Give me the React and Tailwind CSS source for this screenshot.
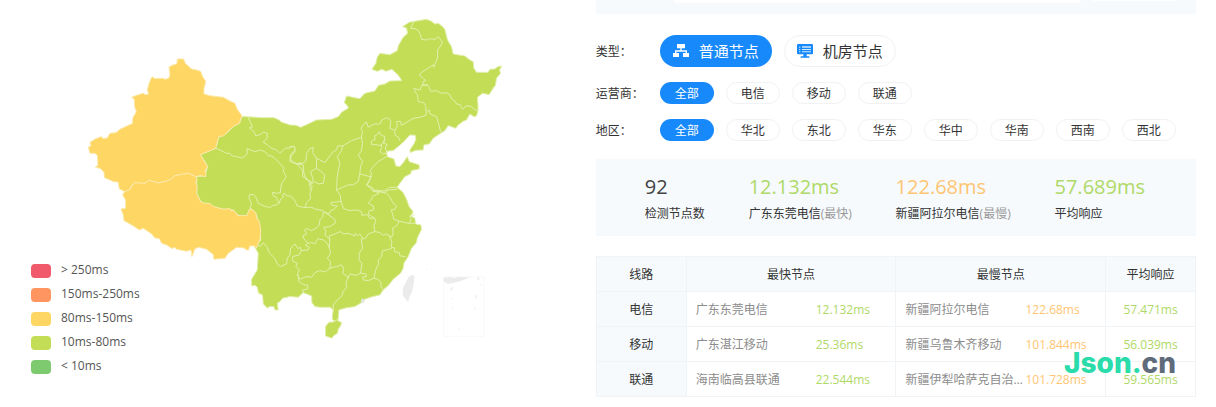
import React from "react";

// Map drawing units: three to a layout pixel. Each outline is given in runs,
// every run relative to the origin of its sheet.
const SHEETS = { A: [240, 30], B: [870, 30], C: [240, 480], D: [720, 480] };

function trace(...runs) {
  return runs
    .map(([sheet, points]) => {
      const [dx, dy] = SHEETS[sheet];
      return points
        .split(" ")
        .map((p) => {
          const [x, y] = p.split(",").map(Number);
          return `${x + dx},${y + dy}`;
        })
        .join(" ");
    })
    .join(" ");
}

const MAINLAND = trace(
  ["A", "486,320 500,320 545,323 582,323 598,330 604,336 630,345"],
  ["B", "0,345 18,346 32,352 50,344 80,330 125,328 145,320 156,306 176,294 170,284 163,278 170,258 210,266 225,250 255,243 266,226 285,222 300,213 336,212 325,195 306,178 288,184 276,178 262,184 246,178 258,160 262,142 270,130 300,134 322,122 326,106 340,82 353,70 350,54 338,50 358,37 385,32 410,28 425,34 435,42 445,40 456,48 465,58 473,90 485,110 490,132 525,138 540,150 550,155 552,175 560,187 595,187 600,178 615,177 624,170 636,168 629,180 632,190 620,205 617,225 608,238 598,254 578,250 563,262 565,300 560,318 552,320 540,312 530,330 520,334 505,345 498,355 475,347 465,362 455,368 430,385 418,402 402,405 400,420 378,421 362,428 360,420 372,402 378,388 376,376 360,375 342,395 325,410 310,422 290,424 292,440 312,447 318,468 330,470 342,456 352,440 358,455 388,465 388,477 365,482 362,492 345,500 330,520 322,532"],
  ["D", "472,82 490,98 500,118 508,140 520,156 512,168 525,175 527,192 543,195 545,208 532,235 530,248 515,265 505,290 492,310 490,325 482,340 460,358 446,376 430,390 420,405 392,412 370,420 362,430 345,440 318,444 297,450 296,466 294,482 285,484 277,478 278,462 280,450 270,442 240,442 225,440 216,428 215,408 190,398 175,412 150,410 128,415 120,425 112,430 115,450 105,450 102,440 90,440 82,444 70,432 68,405 56,400 52,382 45,376 35,378 35,358 52,330 55,280 45,262 62,240"],
  ["C", "542,210 528,160 515,147 508,150 502,166 485,170 475,166 460,150 430,148 390,140 362,125 350,100 350,50 375,48 383,20"],
  ["A", "375,455 361,434 407,415 417,380 437,372 462,348 478,340"]
);

const XINJIANG = trace(
  ["A", "293,147 311,147 316,160 335,177 350,180 362,184 368,200 377,213 376,222 372,235 372,252 390,257 430,262 448,272 465,280 472,298 486,317 478,340 462,348 448,360 437,372 430,378 417,380 412,396 407,415 384,425 361,434 372,452 383,470 376,482 378,500 360,497 348,500 325,490 285,497 272,508 258,514 235,519 220,515 208,511 195,520 180,521 163,518 155,527 148,540 134,545 118,537 115,517 100,515 73,503 72,487 60,475 46,472 54,465 52,437 45,430 30,430 25,412 33,408 30,397 48,386 65,380 68,386 82,384 90,370 108,368 120,358 158,340 158,325 169,305 164,290 163,268 155,262 170,256 190,250 196,254 206,252 202,240 208,218 216,200 225,206 248,205 256,208 267,204 270,195 267,172 276,166 290,162"]
);

const TIBET = trace(
  ["C", "148,90 163,68 195,70 208,61 220,65 235,69 258,64 272,58 285,47 325,40 348,50 352,60 347,66 352,78 350,100 362,125 375,130 390,131 402,140 430,148 450,146 456,154 460,150 475,168 485,166 500,168 508,150 515,147 528,160 530,174 538,184 542,210 540,240 534,252 530,264 522,258 510,258 505,272 490,264 470,262 445,280 435,295 402,298 400,284 380,268 355,262 344,268 340,280 336,290 333,270 320,274 290,268 284,262 276,266 260,255 245,250 238,236 225,234 215,222 190,205 178,210 160,198 132,182 130,165 123,148 130,146 137,145 137,120 128,105 134,95"]
);

const HAINAN = trace(["D", "268,487 280,486 290,480 305,488 303,496 295,508 293,520 283,526 275,535 257,528 257,500"]);

const BORDERS = [
  ["A", "407,415 420,420 440,430 450,430 456,438 470,440 484,444 494,440 502,430 501,416 525,425 540,420 556,426 566,438 576,438 600,460 612,475 610,484 619,500 612,512 605,520 602,540"],
  ["D", "122,90 122,98 110,100 97,97 100,108 110,112 112,122 118,130 122,118 130,112 128,104 135,100 140,108 150,108 160,115 166,125 172,138 195,143"],
  ["D", "30,147 35,130 28,118 28,105 40,103 48,112 55,130 72,138 90,143 96,138 112,134 118,126"],
  ["A", "505,322 512,338 518,350 508,354 520,362 528,378 544,372 550,366 562,370 562,384 550,397 562,404 575,415 590,420 600,430 615,415 630,414 640,408 646,416 642,425 632,434 630,448 650,462 664,458"],
  ["B", "0,410 14,410 15,425 4,438 0,455 20,462 38,460 48,452 50,430 58,418 70,412 68,428 80,445 105,458 120,438 130,425 140,420 143,408 158,408"],
  ["B", "20,462 38,480 38,500 52,506 60,522 68,530 60,540"],
  ["B", "80,445 80,475 62,485 70,510 60,525 75,515 85,522 100,520 105,495 96,486 80,475"],
  ["B", "158,408 155,422 142,440 150,460 146,480 142,500 140,540 175,525 190,524 205,515 210,490 212,470 218,455 205,435 214,424 218,400 215,382 185,392 158,408"],
  ["B", "215,382 218,366 213,355 222,342 230,336 235,352 252,342 270,342 276,330 290,323 300,328 303,335 300,355 314,360 316,376 326,382 330,392"],
  ["B", "316,360 322,350 320,335 332,334 335,346 352,336 370,325 390,322 408,316 410,305 418,300 420,312 440,320 446,340 452,365"],
  ["B", "408,303 408,290 402,278 385,275 383,255 376,246 372,235 390,240 396,226 412,225"],
  ["B", "412,225 418,232 422,244 440,242 455,250 470,248 480,254 486,268 496,274 500,282 510,284 518,298 530,287 545,290 555,300 563,300"],
  ["B", "412,225 398,224 400,214 408,212 400,205 388,195 396,186 410,178 430,165 432,172 436,160 443,145 443,120 452,108 458,97 445,80 436,88 422,86 412,90 395,88 392,74 385,62 376,56 363,55 370,37"],
  ["B", "268,366 274,376 285,380 282,398 270,407 258,404 245,404 244,394 256,388 254,378 262,374 268,366"],
  ["B", "285,388 280,398 292,404 286,414 292,428 280,432 270,425 276,412 274,404"],
  ["B", "290,440 265,455 248,472 240,485 246,492 240,500 225,496 210,492"],
  ["B", "242,498 240,510 232,525 250,535 250,545 285,542 300,532 322,532"],
  ["D", "165,10 190,15 192,40 198,58 212,64 208,76 216,88 210,100 212,115 200,128 195,143 215,142 228,148 250,152 258,160"],
  ["D", "290,90 302,108 302,120 310,145 328,152 350,150 365,155 366,166 382,164 390,176 404,174"],
  ["D", "305,124 272,128 276,136 292,138 280,150 272,152 268,162 252,156"],
  ["D", "395,50 380,75 400,92 412,90 432,98 446,90 472,88"],
  ["D", "400,92 418,100 400,108 392,122 385,130 400,138 402,150 388,152 385,164 404,174 408,185 402,195 405,215"],
  ["D", "412,94 440,100 450,112 460,130 470,138 465,148 454,150 458,162 462,178 478,184 505,190 525,190"],
  ["D", "524,164 510,168 514,178 508,190"],
  ["D", "405,215 420,218 430,226 440,222 455,232 460,222 458,205 470,198 478,184"],
  ["D", "448,228 456,245 454,262 464,264 464,275 478,278 480,288 495,290"],
  ["D", "454,266 440,270 428,272 425,290 415,300 416,312 408,328 402,355"],
  ["D", "405,215 385,222 378,234 364,238 368,265 358,280 358,300 366,310 362,340"],
  ["D", "270,238 268,228 285,222 300,215 312,222 326,220 344,228 346,220 352,228 360,222 368,235"],
  ["D", "258,160 270,168 285,178 286,190 270,200 252,202 258,214 255,225 270,238 268,262"],
  ["D", "250,158 248,172 240,180 238,196 228,205 215,212 200,206 194,210 200,222 188,228 194,240 205,250 215,248 225,252 234,236 250,240 262,250 268,262"],
  ["D", "45,262 50,250 60,260 70,248 82,262 88,278 105,296 112,312 122,320 140,312 142,295 150,285 152,266 165,252 174,266 182,262 184,272 205,270 208,262 196,256 205,250"],
  ["D", "184,272 178,285 158,290 158,303 172,310 168,320 178,330 172,345 180,358 200,350 215,352 225,338 240,332 256,336 270,325"],
  ["D", "268,262 272,280 262,295 272,305 270,325 288,320 305,315 312,328 308,340 325,352"],
  ["D", "325,352 330,342 348,346 362,340 378,342 380,350 368,352 370,360 385,362 402,355 412,358 422,365 424,380 430,390"],
  ["D", "325,352 318,370 320,382 310,395 306,408 292,420 280,435 280,450"],
  ["D", "175,345 176,364 190,374 204,376 202,388 188,390 190,398"],
];

const BANDS = [
  { label: "> 250ms", swatch: "bg-[#f15a6a]" },
  { label: "150ms-250ms", swatch: "bg-[#ff9661]" },
  { label: "80ms-150ms", swatch: "bg-[#fdd663]" },
  { label: "10ms-80ms", swatch: "bg-[#c3dd57]" },
  { label: "< 10ms", swatch: "bg-[#7dcb6e]" },
];

function ChinaMap() {
  return (
    <svg
      viewBox="0 0 1788 1221"
      className="col-start-1 row-start-1 block w-full"
      role="img"
      aria-label="全国响应时间分布"
    >
      <g stroke="#e2efac" strokeWidth="3" strokeLinejoin="round" strokeLinecap="round">
        <polygon points={MAINLAND} fill="#c3dd57" />
        <polygon points={HAINAN} fill="#c3dd57" />
        <g fill="none">
          {BORDERS.map((line, i) => (
            <polyline key={i} points={trace(line)} />
          ))}
        </g>
        <g stroke="#fce9ab">
          <polygon points={XINJIANG} fill="#fdd663" />
          <polygon points={TIBET} fill="#fdd663" />
        </g>
      </g>
      <g transform="translate(720 480)" fill="#ebebeb">
        <path d="M515 345l9 3-2 22-6 26-7 14-4 17-10-12-7-10 2-22 10-20 6-12z" />
        <path d="M363 420l6-4 7 4-4 8-7 4z" fill="#e3e8df" />
        <path d="M558 326h4v4h-4z" fill="#f3f3f3" />
        <rect x="611" y="351" width="122" height="178" fill="none" stroke="#f9f9f9" strokeWidth="3" />
        <path d="M611 354l14-3 18 3 14-3 34 1-31 12-36 8-13-8z" />
        <path
          d="M712 353h7l-1 8h-5zM632 385l10-5-3 8-7 6zM707 405h4v12l-4-2zM702 448l8-8-4 10zM618 476l8 8zM682 487l8-10zM636 414h4v4h-4zM655 506h5v3h-5zM636 440h4v6h-4zM722 372h4v4h-4z"
          fill="#efefef"
        />
      </g>
    </svg>
  );
}

function NodesIcon() {
  return (
    <svg viewBox="0 0 48 42" className="h-3.5 w-4" fill="currentColor" aria-hidden="true">
      <path d="M12 0h24v13H26v6h16v8h6v12H30V27h8v-4H10v4h8v12H0V27h6v-8h16v-6H12z" />
    </svg>
  );
}

function ServerIcon() {
  return (
    <svg viewBox="0 0 48 42" className="h-3.5 w-4" aria-hidden="true">
      <path
        fill="#1789fb"
        d="M3 0h42q3 0 3 3v25q0 3-3 3H29v6h8v4H11v-4h8v-6H3q-3 0-3-3V3Q0 0 3 0z"
      />
      <path
        fill="#fff"
        fillOpacity=".8"
        d="M6 8h4v3H6zM15 7h27v4H15zM6 15h4v3H6zM15 15h27v3H15zM6 22h4v3H6zM15 22h27v3H15z"
      />
    </svg>
  );
}

function FilterRow({ label, options }) {
  return (
    <div className="flex items-center" role="group" aria-label={label}>
      <span className="w-16 shrink-0 pt-0.5">{label}：</span>
      <div className="flex gap-3">
        {options.map((name, i) => (
          <button
            key={name}
            type="button"
            aria-pressed={i === 0}
            className={
              i === 0
                ? "h-[22px] w-[54px] rounded-full bg-[#1789fb] pt-0.5 text-white"
                : "h-[22px] w-[54px] rounded-full border border-[#f1f2f4] bg-white pt-0.5"
            }
          >
            {name}
          </button>
        ))}
      </div>
    </div>
  );
}

function Stat({ value, name, note, tone }) {
  return (
    <div className="whitespace-nowrap">
      <div className={`text-xl leading-7 ${tone}`}>{value}</div>
      <div className="leading-[26px]">
        {name}
        {note && <span className="text-[#999]">{note}</span>}
      </div>
    </div>
  );
}

const ROWS = [
  ["电信", "广东东莞电信", "12.132ms", "新疆阿拉尔电信", "122.68ms", "57.471ms"],
  ["移动", "广东湛江移动", "25.36ms", "新疆乌鲁木齐移动", "101.844ms", "56.039ms"],
  ["联通", "海南临高县联通", "22.544ms", "新疆伊犁哈萨克自治州联通", "101.728ms", "59.565ms"],
];

function NodeCell({ name, time, tone }) {
  return (
    <td className="border border-[#f1f4f6] pt-0.5 pl-[9px]">
      <div className="flex">
        <span className="w-[120px] truncate text-[#8c8c8c]">{name}</span>
        <span className={tone}>{time}</span>
      </div>
    </td>
  );
}

export default function App() {
  return (
    <main className="flex items-start bg-white font-['Open_Sans','Noto_Sans_CJK_SC',sans-serif] text-xs text-[#333]">
      <section className="grid w-[49%] shrink-0">
        <ChinaMap />
        <ul className="col-start-1 row-start-1 mb-[29px] ml-[31px] self-end">
          {BANDS.map(({ label, swatch }) => (
            <li key={label} className="flex h-6 items-center gap-2.5 text-[#555]">
              <span className={`mt-0.5 h-3.5 w-5 rounded-sm ${swatch}`} />
              {label}
            </li>
          ))}
        </ul>
      </section>

      <section className="relative mr-5 min-w-0 flex-1">
        <div className="flex h-3.5 items-start bg-[#f6fafd] pr-5 pl-[78px]">
          <div className="h-[3px] flex-1 rounded-b-sm bg-white" />
          <div className="ml-3 h-px w-[83px] bg-white" />
        </div>

        <div className="mt-[21px] flex items-center" role="group" aria-label="类型">
          <span className="w-16 shrink-0 pt-0.5">类型：</span>
          <div className="flex gap-3 text-[15px]">
            <button
              type="button"
              aria-pressed="true"
              className="flex h-8 w-28 items-center justify-center gap-2.5 rounded-full bg-[#1789fb] text-white"
            >
              <NodesIcon />
              普通节点
            </button>
            <button
              type="button"
              aria-pressed="false"
              className="flex h-8 w-28 items-center justify-center gap-2.5 rounded-full border border-[#f1f2f4] bg-white"
            >
              <ServerIcon />
              机房节点
            </button>
          </div>
        </div>
        <div className="mt-[15px] flex flex-col gap-[15px]">
          <FilterRow label="运营商" options={["全部", "电信", "移动", "联通"]} />
          <FilterRow
            label="地区"
            options={["全部", "华北", "东北", "华东", "华中", "华南", "西南", "西北"]}
          />
        </div>

        <div className="mt-[18px] flex justify-between bg-[#f6fafd] pt-3.5 pr-[51px] pb-[9px] pl-[49px]">
          <Stat value="92" name="检测节点数" tone="text-[#444]" />
          <Stat value="12.132ms" name="广东东莞电信" note="(最快)" tone="text-[#afd966]" />
          <Stat value="122.68ms" name="新疆阿拉尔电信" note="(最慢)" tone="text-[#ffc572]" />
          <Stat value="57.689ms" name="平均响应" tone="text-[#afd966]" />
        </div>

        <table className="mt-5 w-full table-fixed border-collapse">
          <colgroup>
            <col className="w-[15%]" />
            <col className="w-[35%]" />
            <col className="w-[35%]" />
            <col className="w-[15%]" />
          </colgroup>
          <thead>
            <tr className="h-[35px] bg-[#f6fafd]">
              {["线路", "最快节点", "最慢节点", "平均响应"].map((h) => (
                <th key={h} scope="col" className="border border-[#f1f4f6] pt-0.5 font-normal">
                  {h}
                </th>
              ))}
            </tr>
          </thead>
          <tbody>
            {ROWS.map(([line, fast, fastTime, slow, slowTime, mean]) => (
              <tr key={line} className="h-[35px]">
                <th scope="row" className="border border-[#f1f4f6] bg-[#f6fafd] pt-0.5 font-normal">
                  {line}
                </th>
                <NodeCell name={fast} time={fastTime} tone="text-[#afd966]" />
                <NodeCell name={slow} time={slowTime} tone="text-[#ffc572]" />
                <td className="border border-[#f1f4f6] pt-0.5 text-center text-[#afd966]">{mean}</td>
              </tr>
            ))}
          </tbody>
        </table>

        <div className="absolute right-5 bottom-[18px] font-['Inter',sans-serif] text-[28px] leading-8 font-extrabold text-[#2bdcab]">
          Json.<span className="text-[#5f6b7a]">cn</span>
        </div>
      </section>
    </main>
  );
}
